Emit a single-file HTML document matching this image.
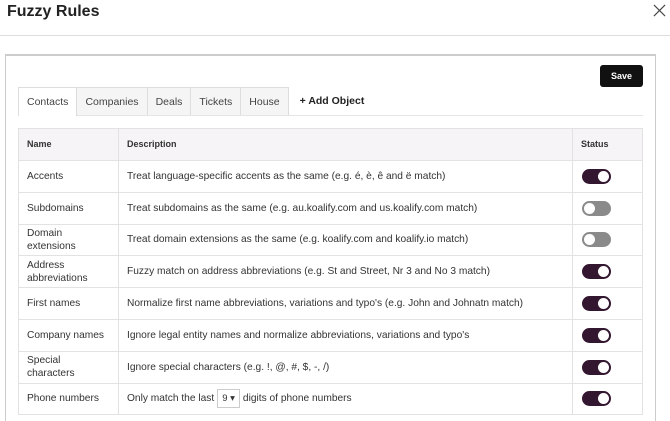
<!DOCTYPE html>
<html><head><style>
*{box-sizing:border-box;margin:0;padding:0}
html,body{width:670px;height:421px;overflow:hidden}
body{background:#fff;font-family:"Liberation Sans",sans-serif;color:#333;position:relative}
.title{position:absolute;left:7px;top:3px;font-size:16px;font-weight:bold;color:#222}
.close{position:absolute;left:653px;top:4px;width:13px;height:13px}
.hr{position:absolute;left:0;top:35px;width:670px;height:1px;background:#ddd}
.panel{position:absolute;left:5px;top:54px;width:651px;height:380px;border:1px solid #ccc;border-top:2px solid #ccc}
.save{position:absolute;left:600px;top:65px;width:43px;height:22px;background:#111;color:#fff;border-radius:3px;font-size:9px;font-weight:bold;text-align:center;line-height:22px}
.tabs{position:absolute;left:18px;top:87px;height:29px;display:flex;font-size:10.5px}
.tab{height:29px;line-height:28px;padding:0 8px;border:1px solid #ddd;border-left:none;background:#f5f5f5;color:#444}
.tab.a{background:#fff;border-left:1px solid #ddd;border-bottom:none}
.add{padding-left:11px;line-height:28px;font-weight:bold;color:#222;font-size:10.5px}
.tabline{position:absolute;left:78px;top:115px;width:565px;height:1px;background:#e5e5e5}
table{position:absolute;left:18px;top:128px;width:625px;border-collapse:collapse;font-size:10.2px;color:#333;table-layout:fixed}
td,th{border:1px solid #e2e2e2;padding:0 8px;text-align:left;vertical-align:middle;height:31.8px;line-height:13px}
th{background:#f6f4f6;font-weight:bold;font-size:9px;height:32px}
.tg{display:block;width:29px;height:15px;border-radius:8px;background:#33162f;position:relative;margin-left:1px}
.tg::after{content:"";position:absolute;right:2px;top:2px;width:11px;height:11px;border-radius:50%;background:#fff}
.tg.off{background:#8a8a8a}
.tg.off::after{left:2px;right:auto}
.sel{display:inline-block;border:1px solid #ccc;height:19px;line-height:17px;padding:0 4px;margin:0 3px;font-size:9.5px;vertical-align:middle}
</style></head><body>
<div class="title">Fuzzy Rules</div>
<svg class="close" viewBox="0 0 14 14"><path d="M1 1L13 13M13 1L1 13" stroke="#444" stroke-width="1.2"/></svg>
<div class="hr"></div>
<div class="panel"></div>
<div class="save">Save</div>
<div class="tabs"><div class="tab a">Contacts</div><div class="tab">Companies</div><div class="tab">Deals</div><div class="tab">Tickets</div><div class="tab">House</div><div class="add">+ Add Object</div></div>
<div class="tabline"></div>
<table>
<tr><th style="width:100px">Name</th><th>Description</th><th style="width:70px">Status</th></tr>
<tr><td>Accents</td><td>Treat language-specific accents as the same (e.g. é, è, ê and ë match)</td><td><span class="tg"></span></td></tr>
<tr><td>Subdomains</td><td>Treat subdomains as the same (e.g. au.koalify.com and us.koalify.com match)</td><td><span class="tg off"></span></td></tr>
<tr><td>Domain extensions</td><td>Treat domain extensions as the same (e.g. koalify.com and koalify.io match)</td><td><span class="tg off"></span></td></tr>
<tr><td>Address abbreviations</td><td>Fuzzy match on address abbreviations (e.g. St and Street, Nr 3 and No 3 match)</td><td><span class="tg"></span></td></tr>
<tr><td>First names</td><td>Normalize first name abbreviations, variations and typo's (e.g. John and Johnatn match)</td><td><span class="tg"></span></td></tr>
<tr><td>Company names</td><td>Ignore legal entity names and normalize abbreviations, variations and typo's</td><td><span class="tg"></span></td></tr>
<tr><td>Special<br>characters</td><td>Ignore special characters (e.g. !, @, #, $, -, /)</td><td><span class="tg"></span></td></tr>
<tr><td>Phone numbers</td><td>Only match the last<span class="sel">9 ▾</span>digits of phone numbers</td><td><span class="tg"></span></td></tr>
</table>
</body></html>
